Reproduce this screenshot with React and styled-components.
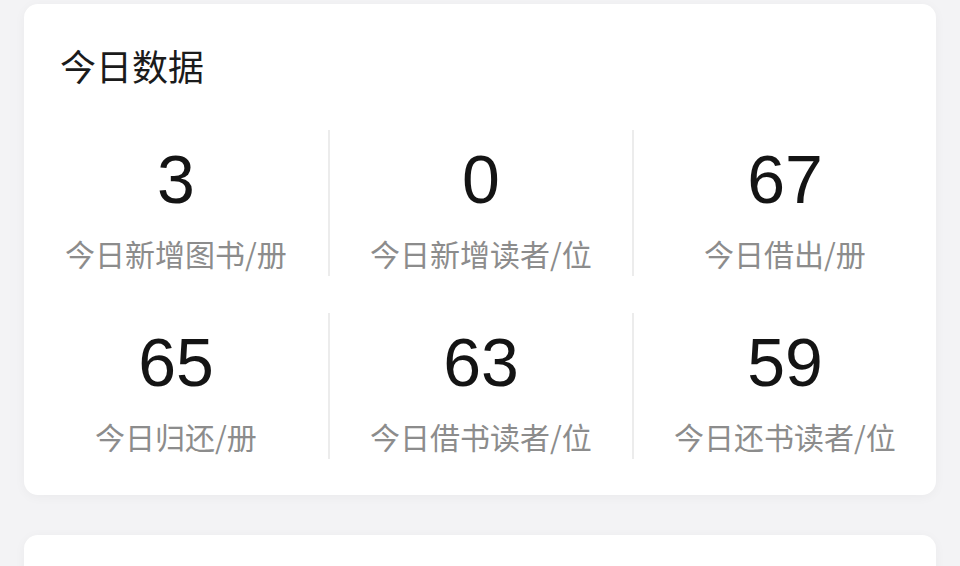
import React from "react";
import styled, { createGlobalStyle } from "styled-components";

const Global = createGlobalStyle`
  html, body { margin: 0; padding: 0; background: #f3f3f5; }
  body { font-family: "Liberation Sans", "Noto Sans CJK SC", sans-serif; }
`;

const Page = styled.div`
  padding: 4px 24px 0;
  display: flex;
  flex-direction: column;
  gap: 40px;
  height: 562px;
  overflow: hidden;
`;

const Card = styled.section`
  background: #ffffff;
  border-radius: 14px;
  box-shadow: 0 2px 12px rgba(0, 0, 0, 0.04);
  padding: ${(p) => (p.$empty ? "0" : "39px 0 36px")};
  min-height: ${(p) => (p.$empty ? "120px" : "auto")};
  flex-shrink: 0;
`;

const Title = styled.h2`
  margin: 0 0 43px 36px;
  font-size: 36px;
  line-height: 44px;
  font-weight: 400;
  color: #1b1b1b;
  font-family: "Noto Sans CJK SC", sans-serif;
`;

const Grid = styled.div`
  display: grid;
  grid-template-columns: repeat(3, 1fr);
  row-gap: 37px;
`;

const Cell = styled.div`
  height: 146px;
  display: flex;
  flex-direction: column;
  align-items: center;
  padding-top: 13px;
  box-sizing: border-box;
  border-left: ${(p) => (p.$first ? "none" : "2px solid #ececec")};
`;

const Value = styled.div`
  font-size: 68px;
  line-height: 72px;
  color: #141414;
  font-family: "Liberation Sans", "Noto Sans CJK SC", sans-serif;
`;

const Label = styled.div`
  margin-top: 18px;
  font-size: 30px;
  line-height: 40px;
  color: #8c8c8c;
  font-family: "Noto Sans CJK SC", sans-serif;
`;

const stats = [
  { value: "3", label: "今日新增图书/册" },
  { value: "0", label: "今日新增读者/位" },
  { value: "67", label: "今日借出/册" },
  { value: "65", label: "今日归还/册" },
  { value: "63", label: "今日借书读者/位" },
  { value: "59", label: "今日还书读者/位" },
];

export default function App() {
  return (
    <>
      <Global />
      <Page>
        <Card>
          <Title>今日数据</Title>
          <Grid>
            {stats.map((s, i) => (
              <Cell key={i} $first={i % 3 === 0}>
                <Value>{s.value}</Value>
                <Label>{s.label}</Label>
              </Cell>
            ))}
          </Grid>
        </Card>
        <Card $empty />
      </Page>
    </>
  );
}
